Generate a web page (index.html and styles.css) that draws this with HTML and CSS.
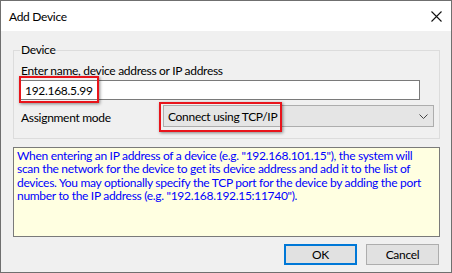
FILE: index.html
```html
<!DOCTYPE html>
<html lang="en">
<head>
    <meta charset="UTF-8">
    <title>Add Device</title>
    <link rel="stylesheet" href="styles.css">
</head>
<body>
    <div class="window">
        <div class="titlebar">
            <span class="title">Add Device</span>
            <svg class="close" width="11" height="11" viewBox="0 0 11 11">
                <path d="M0.5 0.5 L10.5 10.5 M10.5 0.5 L0.5 10.5" stroke="#111" stroke-width="1.1" fill="none"/>
            </svg>
        </div>

        <div class="content">
            <fieldset class="group">
                <legend>Device</legend>
                <label class="field-label" for="address">Enter name, device address or IP address</label>
                <div class="input-wrap">
                    <input class="textbox" id="address" type="text" value="192.168.5.99">
                    <span class="mark mark-ip"></span>
                </div>
                <div class="row">
                    <span class="row-label">Assignment mode</span>
                    <div class="combo">
                        <span>Connect using TCP/IP</span>
                        <svg width="9" height="5" viewBox="0 0 9 5">
                            <path d="M0.5 0.5 L4.5 4.5 L8.5 0.5" stroke="#444" stroke-width="1" fill="none"/>
                        </svg>
                        <span class="mark mark-combo"></span>
                    </div>
                </div>
            </fieldset>

            <div class="info">
                When entering an IP address of a device (e.g. "192.168.101.15"), the system will<br>
                scan the network for the device to get its device address and add it to the list of<br>
                devices. You may optionally specify the TCP port for the device by adding the port<br>
                number to the IP address (e.g. "192.168.192.15:11740").
            </div>

            <div class="buttons">
                <button class="btn btn-default">OK</button>
                <button class="btn">Cancel</button>
            </div>
        </div>
    </div>
</body>
</html>
```

FILE: styles.css
```css
* {
    margin: 0;
    padding: 0;
    box-sizing: border-box;
}

body {
    font-family: Lato, "Liberation Sans", sans-serif;
    font-size: 12px;
    letter-spacing: -0.3px;
    color: #000;
    background: #fff;
}

.window {
    width: 452px;
    height: 273px;
    border: 1px solid #6f6f6f;
    display: flex;
    flex-direction: column;
    background: #f0f0f0;
}

.titlebar {
    height: 30px;
    background: #fff;
    display: flex;
    align-items: center;
    justify-content: space-between;
    padding: 0 9px 0 8px;
}

.title {
    font-size: 12px;
    color: #000;
}

.content {
    flex: 1;
    padding: 11px 11px 0 12px;
}

.group {
    border: 1px solid #dcdcdc;
    padding: 0 5px 10px 6px;
    height: 97px;
}

.group legend {
    padding: 0 1px;
    line-height: 16px;
}

.field-label {
    display: block;
    line-height: 15px;
    margin-top: 5px;
    padding-left: 1px;
}

.input-wrap {
    position: relative;
    width: 400px;
    margin-top: 2px;
}

.textbox {
    width: 400px;
    height: 20px;
    border: 1px solid #7a7a7a;
    background: #fff;
    font: inherit;
    letter-spacing: inherit;
    padding: 0 4px;
    outline: none;
}

.row {
    display: flex;
    align-items: center;
    justify-content: space-between;
    margin-top: 5px;
}

.row-label {
    padding-left: 1px;
    padding-top: 3px;
}

.combo {
    position: relative;
    width: 271px;
    height: 22px;
    background: #e5e5e5;
    border: 1px solid #adadad;
    display: flex;
    align-items: center;
    justify-content: space-between;
    padding: 0 5px 0 4px;
}

.mark {
    position: absolute;
    border: 2px solid #e8141b;
    box-shadow: 1px 1px 3px rgba(0, 0, 0, 0.45);
}

.mark-ip {
    left: -1px;
    top: -4px;
    width: 80px;
    height: 27px;
}

.mark-combo {
    left: -5px;
    top: -4px;
    width: 123px;
    height: 30px;
}

.info {
    margin-top: 8px;
    height: 90px;
    background: #ffffe1;
    border: 1px solid #7a7a7a;
    color: #0000ff;
    line-height: 13.3px;
    padding: 1px 3px;
    white-space: nowrap;
}

.buttons {
    display: flex;
    justify-content: flex-end;
    gap: 9px;
    margin-top: 7px;
    padding-right: 1px;
}

.btn {
    width: 73px;
    height: 21px;
    background: #e1e1e1;
    border: 1px solid #adadad;
    font: inherit;
    letter-spacing: inherit;
    color: #000;
}

.btn-default {
    border: 2px solid #0078d7;
}
```
